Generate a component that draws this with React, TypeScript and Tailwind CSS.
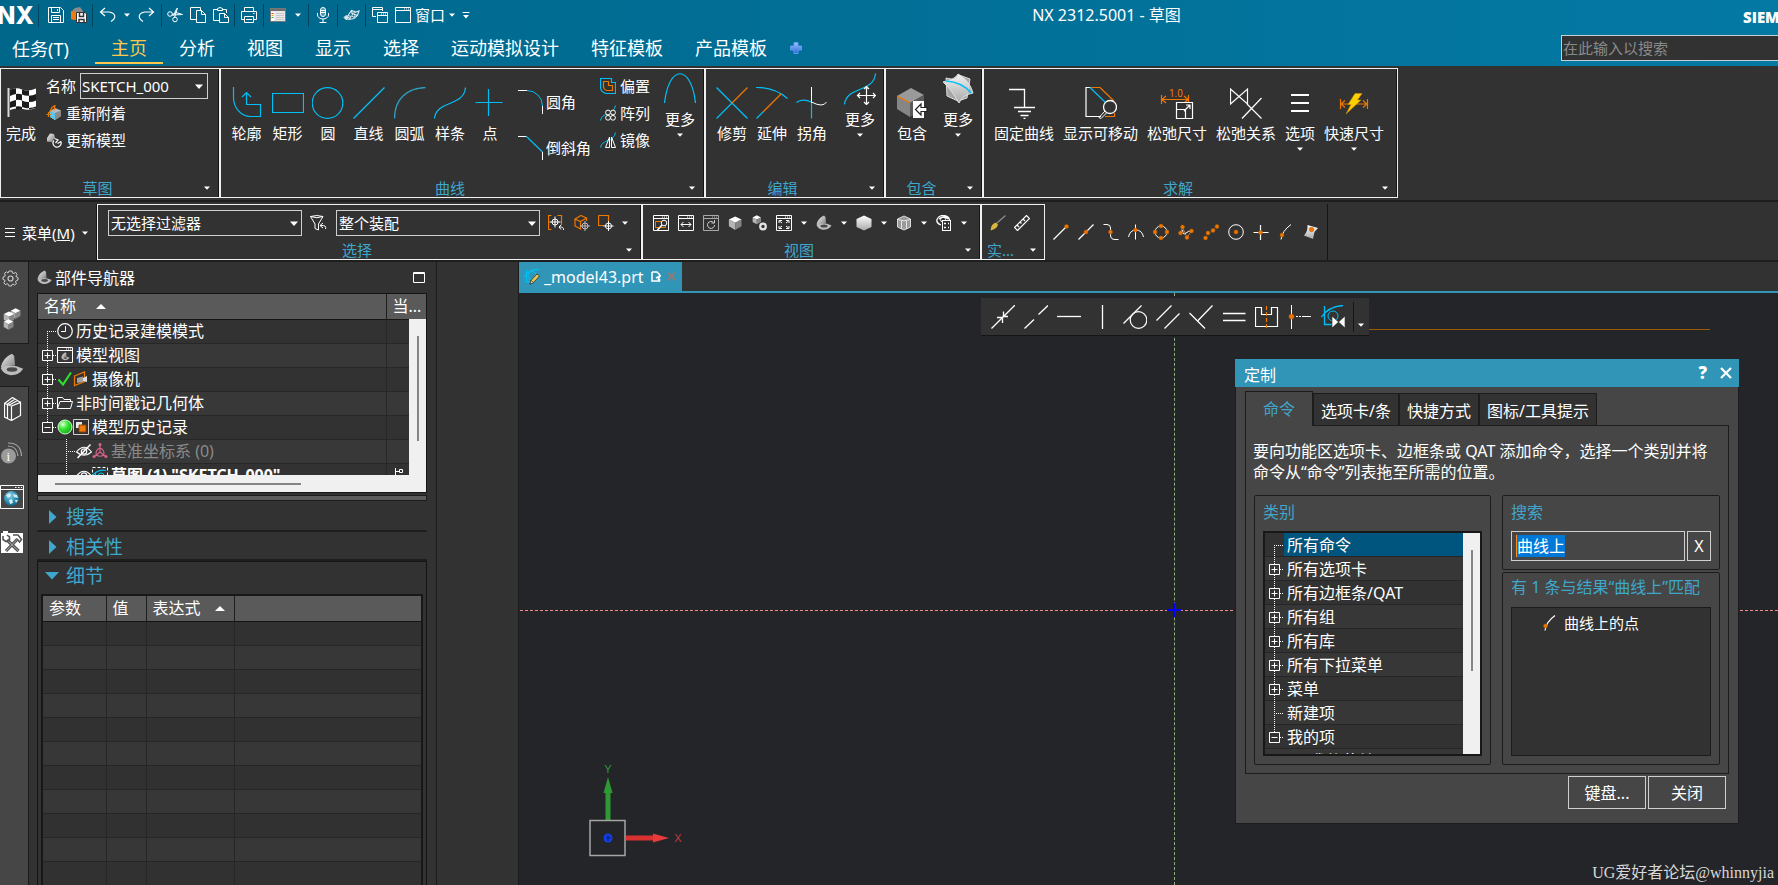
import React, { ReactNode } from "react";

const C = "#00bff5";
const O = "#ee7700";
const W = "#ffffff";

type IconProps = { s?: number; w?: number; h?: number; vb?: string; children: ReactNode };

function Svg({ s = 16, w, h, vb, children }: IconProps) {
  const width = w ?? s;
  const height = h ?? s;
  return (
    <svg
      width={width}
      height={height}
      viewBox={vb ?? `0 0 ${width} ${height}`}
      fill="none"
      stroke={W}
      strokeWidth={1}
      className="block shrink-0"
      aria-hidden="true"
    >
      {children}
    </svg>
  );
}

function Caret() {
  return (
    <Svg w={6} h={4}>
      <path d="M0 0.5H6L3 3.8Z" fill={W} stroke="none" />
    </Svg>
  );
}

function Shades() {
  return (
    <svg width="0" height="0" className="absolute" aria-hidden="true">
      <defs>
        <linearGradient id="metal" x1="0" y1="0" x2="1" y2="1">
          <stop offset="0" stopColor="#f2f2f2" />
          <stop offset="1" stopColor="#7d7d7d" />
        </linearGradient>
        <linearGradient id="flat" x1="0" y1="0" x2="0" y2="1">
          <stop offset="0" stopColor="#ffffff" />
          <stop offset="1" stopColor="#a9a9a9" />
        </linearGradient>
        <radialGradient id="ball" cx="0.35" cy="0.3" r="0.8">
          <stop offset="0" stopColor="#e8ffe0" />
          <stop offset="0.4" stopColor="#3fe83a" />
          <stop offset="1" stopColor="#0aa010" />
        </radialGradient>
        <radialGradient id="globe" cx="0.4" cy="0.3" r="0.8">
          <stop offset="0" stopColor="#7fd3ea" />
          <stop offset="0.6" stopColor="#2a88ab" />
          <stop offset="1" stopColor="#0c5270" />
        </radialGradient>
        <linearGradient id="plus" x1="0" y1="0" x2="0" y2="1">
          <stop offset="0" stopColor="#9cc6ff" />
          <stop offset="1" stopColor="#2a62d8" />
        </linearGradient>
      </defs>
    </svg>
  );
}

function Dot({ x, y, r = 2 }: { x: number; y: number; r?: number }) {
  return <circle cx={x} cy={y} r={r} fill={O} stroke="#b85c00" strokeWidth={0.5} />;
}

/* ---------- title bar icons ---------- */

const SaveIcon = () => (
  <Svg>
    <path d="M0.5 0.5H12.5L15.5 3.5V15.5H0.5ZM3.5 0.5V5.5H11.5V0.5M9.5 2V4M3.5 15.5V8.5H12.5V15.5M5 10.5H11M5 12.5H11" />
  </Svg>
);
const SaveAllIcon = () => (
  <Svg>
    <path d="M4 1L9 0L12 4V8L4 13L0 12V5Z" fill="#8b8b8b" stroke="none" />
    <path d="M0 4L5 5V13L0 12Z" fill="#f07a10" stroke="none" />
    <path d="M5.500 5.500H14L15.500 7V15.500H5.500Z" fill="#fff" stroke="#333" />
    <path d="M8.500 6V9.500H12.500V6M8 15V12.500H13V15" stroke="#333" strokeWidth={1.500} />
  </Svg>
);
const UndoIcon = () => (
  <Svg w={17}>
    <path d="M6 1L1.500 5L6 9M1.500 5H10C17 6 17.500 11 12 14.500" strokeWidth={1.200} />
  </Svg>
);
const RedoIcon = () => (
  <Svg w={17}>
    <path d="M11 1L15.500 5L11 9M15.500 5H7C0 6 -0.500 11 5 14.500" strokeWidth={1.200} />
  </Svg>
);
const CutIcon = () => (
  <Svg>
    <circle cx="3" cy="7" r="2.300" />
    <circle cx="8" cy="12.500" r="2.300" />
    <path d="M5 8L15.500 7.500L9 5.500L5 8M7.500 10.500L10.500 1L9.500 2L6.500 8.500" />
  </Svg>
);
const CopyIcon = () => (
  <Svg>
    <path d="M6.500 3.500H11.500L15.500 7.500V15.500H6.500ZM11.500 3.500V7.500H15.500M6 12.500H0.500V0.500H10.500V3" />
  </Svg>
);
const PasteIcon = () => (
  <Svg>
    <path d="M6.500 6.500H11.500L15.500 10.500V15.500H6.500ZM11.500 6.500V10.500H15.500M6 13.500H0.500V2.500H4M10 2.500H13.500V6M4.500 3.500V1.500L7 0.500L9.500 1.500V3.500Z" />
  </Svg>
);
const PrintIcon = () => (
  <Svg>
    <path d="M3.500 4.500V0.500H12.500V4.500M3.500 12.500H0.500V4.500H15.500V12.500H12.500M3.500 9.500H12.500V15.500H3.500ZM5 12.500H11M12 6.500H13.500" />
  </Svg>
);
const PaneIcon = () => (
  <Svg>
    <rect x="0.500" y="1.500" width="15" height="13" fill="#e9e9e9" stroke="#777" />
    <path d="M1 3H15" stroke="#6e6e6e" strokeWidth={2} />
    <path d="M1 5H4V14H1Z" fill="#fff" stroke="none" />
    <path d="M1.500 6.500H3.500" stroke="#d33" />
    <path d="M1.500 8.500H3.500" stroke="#e8a000" />
    <path d="M1.500 10.500H3.500" stroke="#3a3" />
    <path d="M6 6.500H14M6 8.500H14M6 10.500H14M6 12.500H14" stroke="#c9c9c9" />
  </Svg>
);
const MicIcon = () => (
  <Svg w={12}>
    <rect x="3.500" y="0.500" width="5" height="9" rx="2.500" fill="#4d97b1" />
    <path d="M0.500 6V8A5.500 4 0 0 0 11.500 8V6M6 12V15M2.500 15.500H9.500M4 3.500H8M4 5.500H8" />
  </Svg>
);
const HandIcon = () => (
  <Svg w={17}>
    <path d="M1 10.500L3.500 13L6 10.500L3 8.500Z" fill="#d9e6ec" stroke="#d9e6ec" />
    <path d="M5 8.500L8.500 3.500L13 5L16 4L14.500 8.500L11 11.500L6 12.500L8 9.500ZM8.500 3.500L9 6.500L13 5M11 7L14.500 8.500" stroke="#d9e6ec" strokeWidth={1.200} />
    <circle cx="10.500" cy="8.500" r="1.500" />
  </Svg>
);
const WindowsIcon = () => (
  <Svg>
    <path d="M0.500 0.500H10.500V4M4 9.500H0.500V0.500M0.500 2.500H10.500M5.500 5.500H15.500V15.500H5.500ZM5.500 8.500H15.500M9 7H10M11 7H12M13 7H14" />
  </Svg>
);
const WindowIcon = () => (
  <Svg>
    <path d="M0.500 0.500H15.500V15.500H0.500ZM0.500 3.500H15.500M9 2H10M11 2H12M13 2H14" />
  </Svg>
);

function QatSep() {
  return <span className="h-[23px] w-px bg-[#00455e]" />;
}

function QatButton({ label, children }: { label: string; children: ReactNode }) {
  return (
    <button type="button" aria-label={label} className="flex items-center">
      {children}
    </button>
  );
}

function TitleBar() {
  return (
    <header className="bg-gradient-to-r from-[#00668a] to-[#0479a4] text-white">
      <div className="flex h-[30px] items-center overflow-hidden">
        <div className="w-[38px] shrink-0 overflow-hidden pt-[2px]">
          <span className="-ml-[3px] block font-[Inter,sans-serif] text-[24px] leading-[28px] font-extrabold">NX</span>
        </div>
        <QatSep />
        <div className="flex items-center gap-[7px] pr-[5px] pl-[9px]">
          <QatButton label="保存"><SaveIcon /></QatButton>
          <QatButton label="全部保存"><SaveAllIcon /></QatButton>
        </div>
        <QatSep />
        <div className="flex items-center gap-[8px] pr-[6px] pl-[6px]">
          <QatButton label="撤销"><UndoIcon /></QatButton>
          <QatButton label="撤销列表"><Caret /></QatButton>
          <QatButton label="重做"><RedoIcon /></QatButton>
        </div>
        <QatSep />
        <div className="flex items-center gap-[7px] pr-[5px] pl-[5px]">
          <QatButton label="剪切"><CutIcon /></QatButton>
          <QatButton label="复制"><CopyIcon /></QatButton>
          <QatButton label="粘贴"><PasteIcon /></QatButton>
        </div>
        <QatSep />
        <div className="px-[6px]">
          <QatButton label="打印"><PrintIcon /></QatButton>
        </div>
        <QatSep />
        <div className="flex items-center gap-[9px] pr-[7px] pl-[6px]">
          <QatButton label="窗格"><PaneIcon /></QatButton>
          <QatButton label="窗格列表"><Caret /></QatButton>
        </div>
        <QatSep />
        <div className="px-[8px]">
          <QatButton label="语音"><MicIcon /></QatButton>
        </div>
        <QatSep />
        <div className="px-[5px]">
          <QatButton label="触控"><HandIcon /></QatButton>
        </div>
        <QatSep />
        <div className="flex items-center gap-[7px] pl-[6px]">
          <QatButton label="层叠"><WindowsIcon /></QatButton>
          <button type="button" className="flex items-center gap-1 text-[15px] leading-5">
            <WindowIcon />
            窗口
            <Caret />
          </button>
          <QatButton label="更多命令">
            <Svg w={8} h={7}>
              <path d="M0.500 0.500H7.500" />
              <path d="M1 3H7L4 6.500Z" fill={W} stroke="none" />
            </Svg>
          </QatButton>
        </div>
        <h1 className="flex-1 text-center text-[16px] leading-5 whitespace-nowrap">NX 2312.5001 - 草图</h1>
        <div className="mt-1 w-[35px] shrink-0 overflow-hidden">
          <span className="font-['Open_Sans',sans-serif] text-[15px] leading-5 font-extrabold">SIEMENS</span>
        </div>
      </div>
      <div className="flex h-9 items-stretch text-[18px] leading-6">
        <button type="button" className="w-[95px] pt-[2px] pl-3 text-left">任务(T)</button>
        {["主页", "分析", "视图", "显示", "选择", "运动模拟设计", "特征模板", "产品模板"].map((t, i) => (
          <button
            key={t}
            type="button"
            className={
              i === 0
                ? "mb-[2px] border-b-2 border-[#ffc84a] px-4 pt-1 text-[#ffc84a]"
                : "mb-[2px] border-b-2 border-transparent px-4 pt-1"
            }
          >
            {t}
          </button>
        ))}
        <button type="button" aria-label="添加选项卡" className="ml-[7px]">
          <Svg s={12}>
            <path d="M4 0.500H8V4H11.500V8H8V11.500H4V8H0.500V4H4Z" fill="url(#plus)" stroke="#5f9df0" />
          </Svg>
        </button>
        <div className="flex-1" />
        <input
          type="search"
          aria-label="在此输入以搜索"
          placeholder="在此输入以搜索"
          className="mt-[5px] h-[26px] w-[217px] border border-r-0 border-[#c4cfd4] bg-[#323232] pl-px text-[15px] text-white outline-none placeholder:text-[#8a8a8a]"
        />
      </div>
    </header>
  );
}

/* ---------- ribbon icons ---------- */

const FlagIcon = () => (
  <Svg s={32}>
    <path d="M3.500 1V30" stroke="#d8d8d8" strokeWidth={2} />
    <path d="M5 3Q11 0 17 2.500T31 1.500V21Q24 24 18 22T5 23Z" fill="#fff" stroke="none" />
    <path
      d="M5 3Q8 1.500 11 1.300V7Q8 7.500 5 9ZM17 2.500Q20 3.800 24 3.300V8.800Q20 9 17 7.500ZM11 7Q14 6.500 17 7.500V13.500Q14 12.500 11 13ZM24 8.800Q28 8.500 31 7V13.500Q28 15 24 15ZM5 15Q8 13.500 11 13V19.500Q8 19.800 5 21ZM17 13.500Q20 15 24 15V21Q20 21.500 17 20ZM11 19.500Q14 19 17 20V22L11 22.500ZM24 21Q28 20.500 31 19.500V21L24 22.500Z"
      fill="#1c1c1c"
      stroke="none"
    />
  </Svg>
);
const ProfileIcon = () => (
  <Svg s={32}>
    <path d="M2.500 0V10A17 19 0 0 0 20 29.500H29.500V17.500H15.500V6M11 10L15.500 5.500L20 10" stroke={C} strokeWidth={1.200} />
  </Svg>
);
const RectIcon = () => (
  <Svg s={32}>
    <path d="M0.500 6.500H31.500V25.500H0.500Z" stroke={C} strokeWidth={1.200} />
  </Svg>
);
const CircleIcon = () => (
  <Svg s={32}>
    <circle cx="15.500" cy="16" r="15.300" stroke={C} strokeWidth={1.200} />
  </Svg>
);
const LineIcon = () => (
  <Svg s={32}>
    <path d="M0.500 31.500L31.500 0.500" stroke={C} strokeWidth={1.300} />
  </Svg>
);
const ArcIcon = () => (
  <Svg s={32}>
    <path d="M0.500 31.500C0.500 13 12 1 31.500 0.500" stroke="#2f9fc0" strokeWidth={1.300} />
  </Svg>
);
const SplineIcon = () => (
  <Svg s={32}>
    <path d="M0.500 31.500C2 13 30 20 31.500 0.500" stroke={C} strokeWidth={1.200} />
  </Svg>
);
const PointIcon = () => (
  <Svg s={32}>
    <path d="M1.500 15.500H28.500M14.500 2V29" stroke={C} strokeWidth={1.200} />
  </Svg>
);
const FilletIcon = () => (
  <Svg w={26} h={26}>
    <path d="M0 1.500H9M24.500 17V25" />
    <path d="M9 1.500A15.500 15.500 0 0 1 24.500 17" stroke={C} />
  </Svg>
);
const ChamferIcon = () => (
  <Svg w={26} h={26}>
    <path d="M0 1.500H8.500M24.500 17V25" />
    <path d="M8.500 1.500L24.500 17" stroke={C} strokeWidth={1.200} />
  </Svg>
);
const OffsetIcon = () => (
  <Svg>
    <path d="M0.500 0.500H11.500V4.500H15.500V15.500H6Q0.500 14 0.500 9Z" stroke={C} strokeWidth={1.200} />
    <path d="M3.500 3.500H8.500V7.500H12.500V12.500H7Q3.500 11.500 3.500 8.500Z" stroke={O} strokeWidth={1.200} />
  </Svg>
);
const PatternIcon = () => (
  <Svg>
    <path d="M0.500 15.500C2 7 14 10 15.500 0.500" stroke={C} />
    {[8, 13].map((x) =>
      [7.5, 12.8].map((y) => <circle key={`${x}-${y}`} cx={x} cy={y} r={2.4} fill="#323232" />),
    )}
  </Svg>
);
const MirrorIcon = () => (
  <Svg>
    <path d="M0.500 15.500C2 7 14 10 15.500 0.500" stroke={C} />
    <path d="M9.500 5V15.500H5.500Z M11.500 5V15.500H15.500Z" fill="#323232" />
  </Svg>
);
const ConicIcon = () => (
  <Svg s={32}>
    <path d="M0.500 30C5 -9 27 -9 31.500 30" stroke={C} strokeWidth={1.200} />
  </Svg>
);
const TrimIcon = () => (
  <Svg s={32}>
    <path d="M0.500 31.500L16 16M0.500 0.500L31.500 31.500" stroke={C} strokeWidth={1.300} />
    <path d="M16 16L31.500 0.500" stroke={O} strokeWidth={1.300} />
  </Svg>
);
const ExtendIcon = () => (
  <Svg s={32}>
    <path d="M0 0.500Q18 0 31.500 11.500M0.500 31.500L7 25" stroke={C} strokeWidth={1.200} />
    <path d="M7 25L25 7" stroke={O} strokeWidth={1.300} />
  </Svg>
);
const CornerIcon = () => (
  <Svg s={32}>
    <path d="M15.500 0V16" />
    <path d="M15.500 16V31.500M0.500 15.500Q6 11 15.500 15" stroke={C} strokeWidth={1.200} />
    <path d="M15.500 15Q27 21 30.500 15" />
  </Svg>
);
const MoveCurveIcon = () => (
  <Svg s={32}>
    <path d="M0.500 31.500C2 13 30 20 31.500 0.500" stroke={C} strokeWidth={1.200} />
    <path
      d="M13.500 22.500H31.500M22.500 13.500V31.500M16 20L13.500 22.500L16 25M29 20L31.500 22.500L29 25M20 16L22.500 13.500L25 16M20 29L22.500 31.500L25 29"
      strokeWidth={1.200}
    />
  </Svg>
);
const IncludeIcon = () => (
  <Svg s={32}>
    <path d="M1 9L15 1L28 8L14 16Z" fill="#9a9a9a" stroke="none" />
    <path d="M1 9L14 16V30L1 22Z" fill="#868686" stroke="none" />
    <path d="M28 8L14 16V30L28 22Z" fill="#5a5a5a" stroke="none" />
    <path d="M1 9L14 16" stroke={O} strokeWidth={1.300} />
    <path d="M17 14H28V31H17Z" fill="#fff" stroke="none" />
    <path d="M25 17L19.500 22.500L25 28V24.500H31V20.500H25Z" fill="#fff" stroke="#222" strokeWidth={1.200} />
  </Svg>
);
const SurfaceIcon = () => (
  <Svg s={32}>
    <path d="M4 5L14 7L17 2L28 6L25 25L16 28L5 23Z" fill="#a5a5a5" stroke="#ddd" />
    <path d="M1 9Q14 6 16 1Q28 8 31 20Q20 22 17 30Q9 16 1 9Z" fill="url(#flat)" stroke="#e0e0e0" fillOpacity={0.85} />
    <path d="M4 8Q20 9 29 20" stroke={C} strokeWidth={1.600} />
  </Svg>
);
const FixIcon = () => (
  <Svg s={32}>
    <path d="M1 2.500H16.500V20.500M6 20.500H27M10 24.500H23M12.500 28.500H20.500M15.500 31.500H17.500" strokeWidth={1.300} />
  </Svg>
);
const ShowMovableIcon = () => (
  <Svg s={32}>
    <path d="M5 0.500H1V29.500H16" strokeWidth={1.200} />
    <path d="M5 0.500H15L29 14M29.500 26V29.500H20" stroke={O} strokeWidth={1.200} />
    <path d="M5 0.500L20 15" stroke={C} strokeWidth={1.200} />
    <circle cx="25" cy="20" r="6.500" fill="#323232" strokeWidth={1.300} />
    <path d="M20 24L14 30.500L16 31.500L21.500 26" />
  </Svg>
);
const RelaxDimIcon = () => (
  <Svg w={34} h={32}>
    <path d="M1.500 8V17M28.500 8V17M2 12.500H28M6 9L2 12.500L6 16M24 9L28 12.500L24 16" stroke={O} strokeWidth={1.200} />
    <text x="9" y="10" fill={O} stroke="none" fontSize="10" fontFamily="Roboto, Noto Sans, sans-serif">1.0</text>
    <path d="M16.500 15.500H32.500V31.500H16.500ZM16.500 22.500H25.500V31.500M24 24L30 18M26 18H30V22" fill="#323232" strokeWidth={1.200} />
  </Svg>
);
const RelaxRelIcon = () => (
  <Svg s={32}>
    <path d="M0.500 2V17L17.500 2V17ZM17 17L31.500 31.500M31.500 11L12 31.500" strokeWidth={1.200} />
  </Svg>
);
const OptionsIcon = () => (
  <Svg w={20} h={32}>
    <path d="M1 8H19M1 16H19M1 24H19" strokeWidth={2} />
  </Svg>
);
const RapidDimIcon = () => (
  <Svg s={32}>
    <path d="M2.500 12V22M29.500 12V22M3 17H29M7 13.500L3 17L7 20.500M25 13.500L29 17L25 20.500" stroke={O} strokeWidth={1.200} />
    <path d="M17 6.500H24L19.500 13H23L8 27L13 17.500H10Z" fill="#ffd000" stroke="#c98c00" strokeWidth={0.600} />
  </Svg>
);
const ReattachIcon = () => (
  <Svg>
    <path d="M4 6L9 3L15 5.500V11L9 15L4 12Z" fill="#b9b9b9" stroke="none" />
    <path d="M4 6L9 8V15L4 12Z" fill="#5dc6e8" stroke="none" />
    <path d="M9 8L15 5.500V11L9 15Z" fill="#8a8a8a" stroke="none" />
    <path d="M0.500 9.500H5M2.500 7V12M2.500 9L6 2.500L9 0.500L8 5" stroke={O} strokeWidth={1.200} />
  </Svg>
);
const UpdateIcon = () => (
  <Svg>
    <path d="M1 6L4 1.500L8 2L9 6L6 10L1 9.500Z" fill="url(#metal)" stroke="none" />
    <circle cx="11" cy="11" r="5" fill="#323232" stroke="none" />
    <path d="M8 8.500A4 4 0 1 0 14.500 9M8.500 6.500L12 8L9.500 11M11.500 11.500L15 9.500" strokeWidth={1.200} />
  </Svg>
);

function Big({ icon, label, more, high, cls }: { icon: ReactNode; label: string; more?: boolean; high?: boolean; cls: string }) {
  return (
    <div className={high ? "pt-1" : "pt-[18px]"}>
      <button type="button" className={`${cls} flex flex-col items-center gap-1 text-[15px] leading-5 whitespace-nowrap`}>
        {icon}
        {label}
        {more && <Caret />}
      </button>
    </div>
  );
}

function Small({ icon, label }: { icon: ReactNode; label: string }) {
  return (
    <button type="button" className="flex h-[27px] items-center gap-1 text-[15px] leading-5 whitespace-nowrap">
      {icon}
      {label}
    </button>
  );
}

function Panel({ title, cls, children }: { title: string; cls: string; children: ReactNode }) {
  return (
    <section className={`${cls} flex shrink-0 flex-col border border-[#f0f0f0]`}>
      <div className="flex flex-1 flex-col border-r border-[#151515]">
        <div className="flex flex-1 items-start">{children}</div>
        <div className="flex h-[18px] items-center text-[15px] leading-4 text-[#3fa7cb]">
          <h2 className="flex-1 text-center">{title}</h2>
          <button type="button" aria-label={`${title}选项`} className="w-6 pl-[10px]">
            <Caret />
          </button>
        </div>
      </div>
    </section>
  );
}

function Ribbon() {
  return (
    <div className="flex h-[136px] items-stretch border-b-2 border-[#1e1e1e] pt-[2px] pb-[2px] text-white">
      <Panel title="草图" cls="w-[220px]">
        <Big icon={<FlagIcon />} label="完成" cls="w-[40px]" />
        <div className="flex flex-col pt-[3px] pl-[5px]">
          <div className="flex h-[27px] items-center gap-1 text-[15px] leading-5">
            <label htmlFor="sketch-name">名称</label>
            <span className="relative">
              <select
                id="sketch-name"
                className="block h-[26px] w-[128px] appearance-none border border-[#cfcfcf] bg-[#323232] pl-px text-[15px] leading-5 outline-none"
              >
                <option>SKETCH_000</option>
              </select>
              <span className="pointer-events-none absolute top-[11px] right-[5px]">
                <Svg w={8} h={5}><path d="M0 0.500H8L4 5Z" fill={W} stroke="none" /></Svg>
              </span>
            </span>
          </div>
          <Small icon={<ReattachIcon />} label="重新附着" />
          <Small icon={<UpdateIcon />} label="更新模型" />
        </div>
      </Panel>
      <Panel title="曲线" cls="w-[485px]">
        <div className="flex pl-[5px]">
          <Big icon={<ProfileIcon />} label="轮廓" cls="w-[41px]" />
          <Big icon={<RectIcon />} label="矩形" cls="w-[41px]" />
          <Big icon={<CircleIcon />} label="圆" cls="w-[40px]" />
          <Big icon={<LineIcon />} label="直线" cls="w-[41px]" />
          <Big icon={<ArcIcon />} label="圆弧" cls="w-[41px]" />
          <Big icon={<SplineIcon />} label="样条" cls="w-[40px]" />
          <Big icon={<PointIcon />} label="点" cls="w-[40px]" />
        </div>
        <div className="flex flex-col gap-5 pt-5 pl-2 text-[15px] leading-5">
          <button type="button" className="flex items-center gap-[2px]"><FilletIcon />圆角</button>
          <button type="button" className="flex items-center gap-[2px]"><ChamferIcon />倒斜角</button>
        </div>
        <div className="flex flex-col pt-[3px] pl-[9px]">
          <Small icon={<OffsetIcon />} label="偏置" />
          <Small icon={<PatternIcon />} label="阵列" />
          <Small icon={<MirrorIcon />} label="镜像" />
        </div>
        <div className="pl-[13px]">
          <Big icon={<ConicIcon />} label="更多" high more cls="w-[34px]" />
        </div>
      </Panel>
      <Panel title="编辑" cls="w-[180px]">
        <div className="flex pl-[6px]">
          <Big icon={<TrimIcon />} label="修剪" cls="w-[40px]" />
          <Big icon={<ExtendIcon />} label="延伸" cls="w-[40px]" />
          <Big icon={<CornerIcon />} label="拐角" cls="w-[40px]" />
          <div className="pl-2">
            <Big icon={<MoveCurveIcon />} label="更多" high more cls="w-[40px]" />
          </div>
        </div>
      </Panel>
      <Panel title="包含" cls="w-[98px]">
        <div className="flex gap-[6px] pl-[6px]">
          <Big icon={<IncludeIcon />} label="包含" cls="w-[40px]" />
          <Big icon={<SurfaceIcon />} label="更多" high more cls="w-[40px]" />
        </div>
      </Panel>
      <Panel title="求解" cls="w-[415px]">
        <div className="flex gap-[9px] pl-[10px]">
          <Big icon={<FixIcon />} label="固定曲线" cls="w-[60px]" />
          <Big icon={<ShowMovableIcon />} label="显示可移动" cls="w-[75px]" />
          <Big icon={<RelaxDimIcon />} label="松弛尺寸" cls="w-[60px]" />
          <Big icon={<RelaxRelIcon />} label="松弛关系" cls="w-[60px]" />
          <Big icon={<OptionsIcon />} label="选项" more cls="w-[30px]" />
          <Big icon={<RapidDimIcon />} label="快速尺寸" more cls="w-[60px]" />
        </div>
      </Panel>
    </div>
  );
}

/* ---------- selection bar ---------- */

const WinFrame = ({ color = W }: { color?: string }) => (
  <path d="M0.500 0.500H15.500V15.500H0.500ZM0.500 3.500H15.500M9 2H10M11 2H12M13 2H14" stroke={color} />
);

const Cube = ({ x = 0, y = 0, k = 1 }: { x?: number; y?: number; k?: number }) => (
  <g transform={`translate(${x} ${y}) scale(${k})`} stroke="none">
    <path d="M1 4L8 0.500L15 4L8 7.500Z" fill="#ffffff" />
    <path d="M1 4L8 7.500V15.500L1 11.500Z" fill="#b5b5b5" />
    <path d="M15 4L8 7.500V15.500L15 11.500Z" fill="#858585" />
  </g>
);

function Icon({ label, children }: { label: string; children: ReactNode }) {
  return (
    <button type="button" aria-label={label} className="flex h-[26px] shrink-0 items-center justify-center">
      {children}
    </button>
  );
}

const NavShape = ({ k = 1 }: { k?: number }) => (
  <g transform={`scale(${k})`} stroke="none">
    <path d="M0.500 9.500Q2 3 8 0.500L9.500 2L10 8.500Q6 7.500 3 10.500Z" fill="url(#metal)" />
    <path d="M0.500 10Q7 6.500 15.500 10.500Q12.500 15 7 14.800Q2 14 0.500 10Z" fill="#bdbdbd" />
    <ellipse cx="8" cy="11" rx="3.500" ry="1.500" fill="#4a4a4a" />
  </g>
);

const BrushCurve = () => (
  <Svg>
    <path d="M3 15.500Q4 7 13 0.500" strokeWidth={1.200} />
    <Dot x={3.500} y={11} />
  </Svg>
);

function SnapIcons() {
  const list: [string, ReactNode][] = [
    ["端点", <><path d="M0.500 15.500L14 2" strokeWidth={1.200} /><Dot x={13.500} y={2.500} /></>],
    ["中点", <><path d="M0.500 15.500L15.500 0.500" strokeWidth={1.200} /><Dot x={8} y={8} /></>],
    ["控制点", <><path d="M0.500 0.500H4Q7.500 0.500 7.500 4V11Q7.500 15.500 12 15.500H15.500" /><Dot x={7.500} y={8} /></>],
    ["交点", <><path d="M0.500 13Q2 6 8 6T15.500 13M7.500 0.500V15.500" /><Dot x={7.500} y={6} /></>],
    ["象限点", <><circle cx="8" cy="8" r="6" /><Dot x={8} y={2} /><Dot x={8} y={14} /><Dot x={2} y={8} /><Dot x={14} y={8} /></>],
    ["极点", <><path d="M2.500 9L4.500 3M4.500 3L9 13.500L13.500 7" stroke="#b07a48" /><path d="M4.500 6Q5 12 8 9T13 8" /><Dot x={2.500} y={9} /><Dot x={4.500} y={3} /><Dot x={9} y={13.500} /><Dot x={13.500} y={7} /></>],
    ["定义点", <><path d="M2 14L14 2" strokeDasharray="2 2" stroke="#8a5a2a" /><Dot x={2.500} y={14} /><Dot x={5} y={9} /><Dot x={10} y={6.500} /><Dot x={14} y={2.500} /></>],
    ["圆心", <><circle cx="8" cy="8" r="7.300" /><Dot x={8} y={8} /></>],
    ["现有点", <><path d="M0.500 8.500H15.500M7.500 1V16" strokeWidth={1.200} /><Dot x={7.500} y={8.500} /></>],
    ["曲线上的点", <><path d="M3 15.500Q4 7 13 0.500" /><Dot x={4} y={11} /></>],
    ["面上的点", <><path d="M4.500 1L15 4L11.500 8L10 15L1 11.500Q5 7 4.500 1Z" fill="url(#flat)" stroke="none" /><Dot x={8.500} y={5.500} r={2.300} /></>],
  ];
  return (
    <div className="flex items-center gap-[9px] border-r border-[#151515] pr-[8px] pl-[8px]">
      {list.map(([l, g]) => (
        <Icon key={l} label={l}><Svg>{g}</Svg></Icon>
      ))}
    </div>
  );
}

function FilterSelect({ label, value, cls }: { label: string; value: string; cls: string }) {
  return (
    <span className="relative">
      <select
        aria-label={label}
        className={`${cls} block h-[26px] appearance-none border border-[#cfcfcf] bg-[#323232] pl-[2px] text-[15px] leading-5 outline-none`}
      >
        <option>{value}</option>
      </select>
      <span className="pointer-events-none absolute top-[11px] right-[4px]">
        <Svg w={8} h={5}><path d="M0 0.500H8L4 5Z" fill={W} stroke="none" /></Svg>
      </span>
    </span>
  );
}

function SelectionBar() {
  return (
    <div className="flex h-[60px] items-stretch border-b-2 border-[#1e1e1e] pt-[2px] text-white">
      <div className="flex w-[97px] shrink-0 items-center border-r border-[#151515] pt-[2px] pl-[5px]">
        <button type="button" className="flex items-center gap-[7px] text-[15px] leading-5">
          <Svg w={10} h={10}><path d="M0 0.500H10M0 4.500H10M0 8.500H10" /></Svg>
          <span>菜单(<u>M</u>)</span>
          <Caret />
        </button>
      </div>
      <Panel title="选择" cls="w-[545px]">
        <div className="flex items-center gap-2 pt-[5px] pl-[10px]">
          <FilterSelect label="选择过滤器" value="无选择过滤器" cls="w-[194px]" />
          <Icon label="重置过滤器">
            <Svg w={18}>
              <path d="M0.500 1.500Q7 -0.500 13 1.500Q7 4 0.500 1.500L5 9V13.500L8.500 15V9L13 1.500M15.500 14Q17 10 10.500 10.500M13 8L10 10.500L13 13" />
            </Svg>
          </Icon>
          <FilterSelect label="选择范围" value="整个装配" cls="w-[204px]" />
          <Icon label="重置">
            <Svg w={18}>
              <path d="M3.500 0.500H0.500V14.500H3.500M9.500 0.500H13.500V10" stroke={O} strokeWidth={1.200} />
              <circle cx="7" cy="7" r="3" />
              <path d="M7 1.500V12.500M1.500 7H12.500M15.500 15Q16 11.500 11 12M13 10L11 12L13 14.500" />
            </Svg>
          </Icon>
          <Icon label="选择意图">
            <Svg>
              <path d="M1 4L7 0.500L12.500 3L6.500 6.500ZM1 4V11L6.500 14V6.500M12.500 3V6" stroke={O} strokeWidth={1.200} />
              <circle cx="11" cy="11" r="3" stroke="#bbb" />
              <path d="M11 6V16M6 11H16" stroke="#bbb" />
            </Svg>
          </Icon>
          <Icon label="区域选择">
            <Svg>
              <path d="M0.500 0.500H10.500V6M6 10.500H0.500V0.500" stroke={O} strokeWidth={1.200} />
              <circle cx="10.500" cy="11" r="3" />
              <path d="M10.500 6V16M5.500 11H15.500" />
            </Svg>
          </Icon>
          <Icon label="选择列表"><Caret /></Icon>
        </div>
      </Panel>
      <Panel title="视图" cls="w-[339px]">
        <div className="flex items-center gap-[9px] pt-[5px] pl-[10px]">
          <Icon label="适合窗口">
            <Svg><WinFrame /><path d="M2.500 6.500H12.500V12.500H2.500Z" stroke={O} /><circle cx="11" cy="8" r="2.800" fill="#323232" /><path d="M9 10L4.500 15" strokeWidth={1.500} /></Svg>
          </Icon>
          <Icon label="缩放"><Svg><WinFrame /><path d="M3 9.500H13M5.500 7L3 9.500L5.500 12M10.500 7L13 9.500L10.500 12" /></Svg></Icon>
          <Icon label="旋转"><Svg><WinFrame color="#a8a8a8" /><path d="M10.500 7.500A3.500 3.500 0 1 0 11.500 10M11.500 5V8H8.500" stroke="#cfcfcf" /></Svg></Icon>
          <Icon label="定向视图"><Svg w={15}><Cube y={1} k={0.900} /></Svg></Icon>
          <Icon label="视图设置">
            <Svg w={15}><Cube k={0.600} /><circle cx="11" cy="11.500" r="2.800" stroke="#e5e5e5" strokeWidth={2.200} /></Svg>
          </Icon>
          <Icon label="全屏"><Svg><WinFrame /><path d="M3 8V5.500H6M10 5.500H13V8M3 11V13.500H6M10 13.500H13V11M3.500 6L6 8M12.500 6L10 8M3.500 13L6 11M12.500 13L10 11" /></Svg></Icon>
          <Icon label="全屏列表"><Caret /></Icon>
          <Icon label="剖切"><Svg><NavShape /></Svg></Icon>
          <Icon label="剖切列表"><Caret /></Icon>
          <Icon label="着色">
            <Svg><path d="M0.500 4L8 0.500L15.500 4V12L8 15.500L0.500 12Z" fill="url(#flat)" stroke="none" /></Svg>
          </Icon>
          <Icon label="着色列表"><Caret /></Icon>
          <Icon label="边线">
            <Svg><path d="M1.500 4L8 1L14.500 4V12L8 15L1.500 12Z" fill="#9a9a9a" stroke="#ddd" /><path d="M1.500 4.500Q8 7 14.500 4.500M5.500 6V14M10.500 6V14" stroke="#e5e5e5" /></Svg>
          </Icon>
          <Icon label="边线列表"><Caret /></Icon>
          <Icon label="显示选项">
            <Svg><path d="M5 10Q0 8 1 4.500Q3 0 8 0.500Q13 1 13.500 5M3 4Q8 0 12 4" strokeWidth={1.300} /><circle cx="7" cy="4.500" r="2.500" /><rect x="6.500" y="5.500" width="8" height="10" fill="#323232" /><path d="M8 8.500H10M12 8.500H13M8 12.500H10M12 12.500H13" strokeWidth={1.500} /></Svg>
          </Icon>
          <Icon label="显示选项列表"><Caret /></Icon>
        </div>
      </Panel>
      <section className="flex w-[64px] shrink-0 flex-col border border-[#f0f0f0] pr-[2px]">
        <div className="flex flex-1 items-start gap-2 pt-[5px] pl-2">
          <Icon label="编辑显示">
            <Svg><path d="M7 8L15.500 0.500" stroke="#8d8d8d" strokeWidth={1.200} /><path d="M0.500 15.500Q1 8.500 6 7.500L8 9.500Q7 14 0.500 15.500Z" fill="#d9b441" stroke="none" /></Svg>
          </Icon>
          <Icon label="测量">
            <Svg><path d="M0.500 12.500L12.500 0.500L15.500 3.500L3.500 15.500ZM3 10L5 12M6 7L7.500 8.500M9 4L11 6" strokeWidth={1.200} /></Svg>
          </Icon>
        </div>
        <div className="flex h-[18px] items-center justify-between pr-[6px] pl-[5px] text-[15px] leading-4 text-[#3fa7cb]">
          <h2>实...</h2>
          <button type="button" aria-label="实用工具选项"><Caret /></button>
        </div>
      </section>
      <SnapIcons />
    </div>
  );
}

/* ---------- left resource bar ---------- */

function ResourceBar() {
  return (
    <nav aria-label="资源条" className="flex w-[29px] shrink-0 flex-col border-r border-[#1c1c1c] bg-[#464646]">
      <button type="button" aria-label="设置" className="flex h-8 items-center pl-[2px]">
        <Svg s={17}>
          <circle cx="8.500" cy="8.500" r="2.500" stroke="#cfcfcf" strokeWidth={1.200} />
          <path
            d="M7 1H10L10.500 3L12 3.500L13.700 2.300L15 4.500L14 6L14.300 7L16 7.500V10L14.300 10.500L13.500 12L14.500 13.500L12.500 15L11 14L10 14.500L9.500 16H7L6.500 14.500L5 13.700L3.500 14.700L1.800 12.700L3 11L2.700 10L1 9.500V7L2.700 6.500L3.300 5L2.300 3.500L4.300 1.800L6 3Z"
            stroke="#cfcfcf"
          />
        </Svg>
      </button>
      <button type="button" aria-label="装配导航器" className="flex h-[49px] items-center pl-[3px]">
        <Svg w={18} h={22}><Cube x={7} k={0.700} /><Cube x={0} y={3} k={0.750} /><Cube y={11} k={0.700} /></Svg>
      </button>
      <button type="button" aria-label="部件导航器" className="-mr-px flex h-[44px] items-center border-y border-[#1c1c1c] bg-[#323232]">
        <Svg s={24}><NavShape k={1.500} /></Svg>
      </button>
      <button type="button" aria-label="重用库" className="flex h-[44px] items-center pl-1">
        <Svg w={18} h={24}>
          <path d="M0.500 6.500L7.500 9V23.500L0.500 20ZM7.500 9L16.500 5.500V18.500L7.500 23.500M0.500 6.500L8.500 0.500L16.500 5.500M3 7.500L11 2M5 8.200L13.500 3.500M3.500 7.500V21.500" strokeWidth={1.200} />
        </Svg>
      </button>
      <button type="button" aria-label="信息" className="flex h-[43px] items-center">
        <Svg w={24} h={24}>
          <circle cx="8.500" cy="15" r="7.500" fill="#9b9b9b" stroke="none" />
          <text x="6.500" y="19.500" fill={W} stroke="none" fontSize="13" fontFamily="Liberation Serif, serif">i</text>
          <path d="M8 5Q17 5 18 15M8 2Q21 2 21.500 15" stroke="#a5a5a5" strokeWidth={1.200} />
        </Svg>
      </button>
      <button type="button" aria-label="网页浏览器" className="flex h-[46px] items-center">
        <Svg s={24}>
          <path d="M0.500 0.500H23.500V23.500H0.500ZM0.500 4.500H23.500M15 2.500H16.500M18 2.500H19.500M21 2.500H22" />
          <circle cx="11.500" cy="13.500" r="7.500" fill="url(#globe)" stroke="none" />
          <path d="M6 10L10 8L11 11L8 13ZM13 9L17 10L18 13L14 12ZM9 15L12 14L13 18L10 19ZM15 15L18 15L16 18Z" fill="#d6ecf3" stroke="none" />
        </Svg>
      </button>
      <button type="button" aria-label="角色" className="flex h-[44px] items-center">
        <Svg w={24} h={23}>
          <path d="M1 2H23V22H1ZM3 0H8V2H3Z" fill="#fff" stroke="none" />
          <path d="M7 9L18.500 20M17.500 8L6 20" stroke="#555" strokeWidth={3.200} />
          <path d="M7 9L18.500 20M17.500 8L6 20" stroke="#aaa" strokeWidth={1} />
          <path d="M13 4H18L21.500 8.500L19.500 11L17 8M3 5V8.500L6 10.500L9.500 9V6L7 4" stroke="#555" strokeWidth={1.600} />
        </Svg>
      </button>
    </nav>
  );
}

/* ---------- part navigator ---------- */

type Branch = "first" | "plus" | "minus" | "leaf";

function Gutter({ kind }: { kind: Branch }) {
  return (
    <Svg w={19} h={24}>
      <g strokeDasharray="1 1">
        {kind === "first" && <path d="M9.500 12V24M9 12.500H19" />}
        {kind === "plus" && <path d="M9.500 0V7M9.500 18V24M15 12.500H19" />}
        {kind === "minus" && <path d="M9.500 0V7M15 12.500H19" />}
        {kind === "leaf" && <path d="M9.500 0V24M9 12.500H19" />}
      </g>
      {(kind === "plus" || kind === "minus") && <path d="M4.500 7.500H14.500V17.500H4.500ZM6.500 12.500H12.500" />}
      {kind === "plus" && <path d="M9.500 9.500V15.500" />}
    </Svg>
  );
}

const ClockIcon = () => (
  <Svg><circle cx="8" cy="8" r="7.300" strokeWidth={1.200} /><path d="M8.500 3V8.500H4" /></Svg>
);
const ViewIcon = () => (
  <Svg><WinFrame /><g transform="translate(4 5) scale(0.55)"><NavShape /></g></Svg>
);
const CheckIcon = () => (
  <Svg><path d="M1.500 8.500L6 13.500L14 1.500" stroke="#2ee02a" strokeWidth={2.200} /></Svg>
);
const CameraIcon = () => (
  <Svg>
    <path d="M1.500 5L11.500 1V10.500L1.500 14.500Z" stroke={O} strokeWidth={1.300} />
    <path d="M4 7L10 5.500V11L4 12Z" fill="#a0a0a0" stroke="none" />
    <path d="M10 7L14 5V11L10 10Z" fill="#ddd" stroke="none" />
  </Svg>
);
const FolderIcon = () => (
  <Svg><path d="M0.500 13.500V2.500H5.500L7 4.500H13.500V6.500M0.500 13.500L3 6.500H15.500L13.500 13.500Z" /></Svg>
);
const BallIcon = () => (
  <Svg><circle cx="8" cy="8" r="7" fill="url(#ball)" stroke="#d6ffd2" /></Svg>
);
const HistoryIcon = () => (
  <Svg>
    <path d="M0.500 0.500H15.500V15.500H0.500Z" stroke="#cfcfcf" />
    <path d="M3 3H9V9H3Z" fill="#e9e9e9" stroke="none" />
    <path d="M6 6H13V13H6Z" fill="#f07a10" stroke="#8a4300" />
  </Svg>
);
const EyeIcon = ({ off }: { off?: boolean }) => (
  <Svg>
    <path d="M0.500 9Q8 -0.500 15.500 9Q8 15.500 0.500 9Z" strokeWidth={1.200} />
    <circle cx="8" cy="8.500" r="2.700" strokeWidth={1.200} />
    {off && <path d="M1.500 15L14.500 1.500" strokeWidth={1.500} />}
  </Svg>
);
const CsysIcon = () => (
  <Svg>
    <path d="M8 2V9L2.500 13.500M8 9L13.500 13.500M4 12Q3.500 6.500 8 5Q12.500 6.500 12 12Q8 14.500 4 12" stroke="#d4648a" strokeWidth={1.200} />
    <circle cx="8" cy="1.500" r="1.500" fill="#d4648a" stroke="none" />
    <circle cx="2" cy="13.500" r="1.500" fill="#d4648a" stroke="none" />
    <circle cx="14" cy="13.500" r="1.500" fill="#d4648a" stroke="none" />
  </Svg>
);
const SketchIcon = () => (
  <Svg>
    <path d="M0.500 0.500H15.500V15.500H0.500Z" strokeDasharray="3 2" />
    <path d="M3.500 13V5M1 8Q7 2 14 3.500" stroke={C} strokeWidth={1.200} />
    <circle cx="9" cy="9" r="3" stroke={C} />
  </Svg>
);

type NavRow = { kind: Branch; deep?: boolean; icons: ReactNode; text: string; cls?: string };

const navRows: NavRow[] = [
  { kind: "first", icons: <ClockIcon />, text: "历史记录建模模式" },
  { kind: "plus", icons: <ViewIcon />, text: "模型视图" },
  { kind: "plus", icons: <><CheckIcon /><CameraIcon /></>, text: "摄像机" },
  { kind: "plus", icons: <FolderIcon />, text: "非时间戳记几何体" },
  { kind: "minus", icons: <><BallIcon /><HistoryIcon /></>, text: "模型历史记录" },
  { kind: "leaf", deep: true, icons: <><EyeIcon off /><CsysIcon /></>, text: "基准坐标系 (0)", cls: "text-[#8a8a8a]" },
  { kind: "leaf", deep: true, icons: <><EyeIcon /><SketchIcon /></>, text: '草图 (1) "SKETCH_000"', cls: "font-bold" },
];

const SortUp = () => (
  <Svg w={10} h={5}><path d="M0 5L5 0L10 5Z" fill={W} stroke="none" /></Svg>
);

function PartTree() {
  return (
    <div className="border border-[#151515]">
      <div className="relative h-[181px] overflow-hidden">
        <table className="w-full table-fixed border-collapse text-[16px] leading-5">
          <colgroup>
            <col />
            <col className="w-[40px]" />
          </colgroup>
          <thead>
            <tr className="h-[25px] border-b border-[#151515] bg-[#5a5a5a] text-left">
              <th className="border-r border-[#1e1e1e] p-0 pl-[6px] font-normal">
                <span className="flex items-center gap-[20px]">名称 <SortUp /></span>
              </th>
              <th className="p-0 pl-[6px] font-normal whitespace-nowrap">当...</th>
            </tr>
          </thead>
          <tbody>
            {navRows.map((r, i) => (
              <tr key={r.text} className={i % 2 ? "h-6 bg-[#383838]" : "h-6 bg-[#323232]"}>
                <td className="border-r border-b border-[#272727] p-0">
                  <div className="flex h-[23px] items-center">
                    {r.deep && <span className="w-[19px]" />}
                    <Gutter kind={r.kind} />
                    {r.icons}
                    <span className={`${r.cls ?? ""} ml-[3px] whitespace-nowrap`}>{r.text}</span>
                  </div>
                </td>
                <td className="border-b border-[#272727] p-0 pl-2">
                  {i === 6 && (
                    <Svg w={9} h={16}>
                      <path d="M0.500 1V15M0.500 4.500H4M4.500 2.500H7.500V5.500H4.500Z" />
                      <path d="M4 8H8V12H4Z" fill="#f07a10" stroke="none" />
                    </Svg>
                  )}
                </td>
              </tr>
            ))}
          </tbody>
        </table>
        <div className="absolute top-[25px] right-0 bottom-0 w-[17px] bg-[#f0f0f0]">
          <div className="mt-[17px] ml-2 h-[105px] w-[2px] bg-[#858585]" />
        </div>
      </div>
      <div className="h-[17px] bg-[#f0f0f0] pt-2 pr-[125px] pl-[17px]">
        <div className="h-[2px] bg-[#858585]" />
      </div>
    </div>
  );
}

const TriRight = () => (
  <Svg w={8} h={14}><path d="M0 0L7.500 7L0 14Z" fill="#3fa7cb" stroke="none" /></Svg>
);

function PartNavigator() {
  return (
    <aside className="flex w-[408px] shrink-0 flex-col overflow-hidden border-r border-[#1c1c1c] pr-[9px] pl-2 text-white">
      <div className="flex h-[31px] shrink-0 items-center gap-[3px] pr-[2px]">
        <Svg s={15}><NavShape k={0.950} /></Svg>
        <h2 className="flex-1 text-[16px] leading-5">部件导航器</h2>
        <button type="button" aria-label="最大化">
          <Svg w={12} h={11}><path d="M0.500 0.500H11.500V10.500H0.500ZM0 1.500H12" /></Svg>
        </button>
      </div>
      <PartTree />
      <div className="mt-[2px] h-[6px] shrink-0 border border-[#1c1c1c] bg-[#5a5a5a]" />
      <button type="button" className="flex h-[31px] shrink-0 items-center gap-[9px] border-b-2 border-[#1e1e1e] pt-[3px] pl-3 text-[19px] leading-6 text-[#3fa7cb]">
        <TriRight />搜索
      </button>
      <button type="button" className="flex h-[29px] shrink-0 items-center gap-[9px] border-b-2 border-[#1e1e1e] pt-[2px] pl-3 text-[19px] leading-6 text-[#3fa7cb]">
        <TriRight />相关性
      </button>
      <section className="flex min-h-0 flex-1 flex-col border border-b-0 border-[#151515] px-[3px]">
        <button type="button" className="flex h-8 shrink-0 items-center gap-[7px] pb-1 pl-1 text-[19px] leading-6 text-[#3fa7cb]">
          <Svg w={14} h={8}><path d="M0 0H14L7 7.500Z" fill="#3fa7cb" stroke="none" /></Svg>
          细节
        </button>
        <div className="min-h-0 flex-1 overflow-hidden border-2 border-b-0 border-[#181818]">
          <table className="w-full table-fixed border-collapse text-[16px] leading-5">
            <colgroup>
              <col className="w-[63px]" />
              <col className="w-[40px]" />
              <col className="w-[88px]" />
              <col />
            </colgroup>
            <thead>
              <tr className="h-[25px] border-b border-[#151515] bg-[#5a5a5a] text-left">
                <th className="border-r border-[#1e1e1e] p-0 pl-[6px] font-normal">参数</th>
                <th className="border-r border-[#1e1e1e] p-0 pl-[6px] font-normal">值</th>
                <th className="border-r border-[#1e1e1e] p-0 pl-[6px] font-normal">
                  <span className="flex items-center gap-[14px]">表达式 <SortUp /></span>
                </th>
                <th className="p-0" />
              </tr>
            </thead>
            <tbody>
              {Array.from({ length: 12 }, (_, i) => (
                <tr key={i} className={i % 2 ? "h-6 bg-[#373737]" : "h-6 bg-[#313131]"}>
                  <td className="border-r border-b border-[#262626]" />
                  <td className="border-r border-b border-[#262626]" />
                  <td className="border-r border-b border-[#262626]" />
                  <td className="border-b border-[#262626]" />
                </tr>
              ))}
            </tbody>
          </table>
        </div>
      </section>
    </aside>
  );
}

/* ---------- graphics window ---------- */

function ConstraintBar() {
  const list: [string, ReactNode][] = [
    ["重合", <path d="M0.500 23.500L24 0M6 12.500H11.500V18M17 11.500H11.500M12.500 12V6.500" strokeWidth={1.300} />],
    ["共线", <path d="M0.500 23.500L10 14.500M14.500 9.500L24 0.500" strokeWidth={1.300} />],
    ["水平", <path d="M0 11.500H24" strokeWidth={1.300} />],
    ["竖直", <path d="M12.500 0V24" strokeWidth={1.300} />],
    ["相切", <><circle cx="15.500" cy="15" r="8.300" strokeWidth={1.200} /><path d="M0.500 18.500L18.500 0.500" strokeWidth={1.200} /></>],
    ["平行", <path d="M0.500 15.500L15.500 0.500M8.500 23.500L23.500 8.500" strokeWidth={1.300} />],
    ["垂直", <path d="M0.500 8L16 23.500M9 15.500L23.500 0.500" strokeWidth={1.300} />],
    ["相等", <path d="M1 8.500H23.500M1 15.500H23.500" strokeWidth={1.300} />],
    ["对称", <><path d="M0.500 2.500H6.500V9.500H16.500V2.500H22.500V21.500H0.500Z" strokeWidth={1.200} /><path d="M11.500 1V23" stroke={O} strokeDasharray="4 2" strokeWidth={1.200} /></>],
    ["中点", <><path d="M3.500 0V24" /><path d="M8 11.500H24" strokeDasharray="2 1 2 1 9" /><Dot x={3.500} y={11.500} r={2.500} /></>],
    ["松弛", <><path d="M3.500 1V19.500H12M0.500 12Q8 1 22 0.500" stroke={C} strokeWidth={1.300} /><circle cx="12" cy="11" r="5" stroke={C} /><path d="M11 11V23L17.500 17ZM24 11V23L17.500 17Z" fill={W} stroke="#222" strokeWidth={0.600} /></>],
  ];
  return (
    <div className="absolute top-[5px] left-[462px] flex h-[38px] items-center gap-[9px] border-b border-[#151515] bg-[#323232] pr-[5px] pl-[10px]">
      {list.map(([l, g]) => (
        <button key={l} type="button" aria-label={l}><Svg s={24}>{g}</Svg></button>
      ))}
      <span className="-ml-px h-[30px] w-px bg-[#151515]" />
      <button type="button" aria-label="更多关系" className="-ml-[5px] pt-4"><Caret /></button>
    </div>
  );
}

function Triad() {
  return (
    <svg width="110" height="100" viewBox="0 0 110 100" className="absolute top-[468px] left-[65px]" aria-label="坐标系">
      <text x="24" y="12" fill="#2f9a35" fontSize="11" fontFamily="Liberation Sans Narrow, Liberation Sans, sans-serif" textAnchor="middle">Y</text>
      <rect x="21.500" y="30" width="5" height="30" fill="#2f9a35" />
      <path d="M24 16L28.500 32H19.500Z" fill="#2f9a35" />
      <rect x="6" y="59.500" width="35" height="35" fill="none" stroke="#a5a5a5" strokeWidth="1.500" />
      <ellipse cx="24" cy="77" rx="4.500" ry="4.500" fill="#1040e8" />
      <path d="M22 77H27M24 74V80" stroke="#061a80" />
      <rect x="42" y="74.500" width="28" height="5" fill="#d93030" />
      <path d="M85 77L69 81.500V72.500Z" fill="#e83a3a" />
      <text x="94" y="81" fill="#c33a3a" fontSize="11" fontFamily="Liberation Sans Narrow, Liberation Sans, sans-serif" textAnchor="middle">X</text>
    </svg>
  );
}

const categories: [Branch, string][] = [
  ["first", "所有命令"],
  ["plus", "所有选项卡"],
  ["plus", "所有边框条/QAT"],
  ["plus", "所有组"],
  ["plus", "所有库"],
  ["plus", "所有下拉菜单"],
  ["plus", "菜单"],
  ["leaf", "新建项"],
  ["minus", "我的项"],
];

function CustomizeDialog() {
  return (
    <div
      role="dialog"
      aria-label="定制"
      className="absolute top-[66px] right-[39px] w-[504px] border border-t-0 border-[#1c1c1c] bg-[#464646] pb-[14px] text-[16px] leading-5 text-white"
    >
      <div className="-mx-px flex h-7 items-center bg-[#3195b8] pr-[7px] pl-[9px]">
        <h2 className="flex-1 pt-1">定制</h2>
        <button type="button" aria-label="帮助" className="mr-[13px] font-['Open_Sans',sans-serif] text-[17px] font-extrabold">?</button>
        <button type="button" aria-label="关闭窗口">
          <Svg s={12}><path d="M1 1L11 11M11 1L1 11" strokeWidth={2.200} /></Svg>
        </button>
      </div>
      <div className="px-[9px] pt-1">
        <div role="tablist" className="flex h-[34px] items-end">
          <button type="button" role="tab" aria-selected="true" className="relative z-10 -mb-px h-[35px] border border-b-0 border-[#1c1c1c] bg-[#464646] px-[17px] text-[#3fa7cb]">
            命令
          </button>
          {["选项卡/条", "快捷方式", "图标/工具提示"].map((t) => (
            <button key={t} type="button" role="tab" aria-selected="false" className="h-8 border border-b-0 border-[#1c1c1c] bg-[#323232] px-[7px] pt-[2px]">
              {t}
            </button>
          ))}
        </div>
        <div className="border border-[#1c1c1c] px-2 pb-2">
          <p className="-ml-px pt-[15px] pb-3 leading-[21px]">
            要向功能区选项卡、边框条或 QAT 添加命令，选择一个类别并将命令从“命令”列表拖至所需的位置。
          </p>
          <div className="flex h-[270px] gap-[11px]">
            <section className="flex flex-1 flex-col rounded-xs border border-[#1c1c1c] px-2 pt-[6px] pb-2">
              <h3 className="mb-[9px] text-[#3fa7cb]">类别</h3>
              <div className="flex min-h-0 flex-1 overflow-hidden border-2 border-[#181818]">
                <ul role="tree" className="flex-1">
                  {categories.map(([k, t], i) => (
                    <li key={t} role="treeitem" className={i % 2 ? "flex h-6 items-stretch border-b border-[#262626] bg-[#373737]" : "flex h-6 items-stretch border-b border-[#262626] bg-[#323232]"}>
                      <Gutter kind={k} />
                      <span className={i === 0 ? "flex-1 bg-[#00557f] pt-[2px] pl-[3px]" : "flex-1 pt-[2px] pl-[3px]"}>{t}</span>
                    </li>
                  ))}
                  <li role="treeitem" className="flex h-6 bg-[#373737] pt-[2px] pl-[45px]">我的菜单</li>
                </ul>
                <div className="w-[17px] bg-[#f0f0f0]">
                  <div className="mt-[17px] ml-2 h-[121px] w-[2px] bg-[#858585]" />
                </div>
              </div>
            </section>
            <div className="flex w-[218px] flex-col gap-[2px]">
              <section className="rounded-xs border border-[#1c1c1c] px-2 pt-[6px] pb-2">
                <label htmlFor="cmd-search" className="mb-[9px] block text-[#3fa7cb]">搜索</label>
                <div className="flex h-[30px] items-stretch gap-[2px]">
                  <span className="relative flex flex-1">
                    <input
                      id="cmd-search"
                      defaultValue="曲线上"
                      className="w-full border border-[#cfcfcf] bg-transparent pl-[5px] outline-none"
                    />
                    <span aria-hidden="true" className="pointer-events-none absolute top-[4px] left-[5px] h-[22px] border-l border-[#ff8a20] bg-[#0078d7] leading-[22px]">
                      曲线上
                    </span>
                  </span>
                  <button type="button" aria-label="清除" className="w-6 border border-[#cfcfcf]">X</button>
                </div>
              </section>
              <section className="flex flex-1 flex-col rounded-xs border border-[#1c1c1c] px-2 pt-1 pb-2">
                <h3 className="mb-[10px] whitespace-nowrap text-[#3fa7cb]">有 1 条与结果“曲线上”匹配</h3>
                <ul className="flex-1 border border-[#1c1c1c] bg-[#323232] pt-[5px]">
                  <li className="flex items-center gap-[6px] pl-[30px] text-[15px]">
                    <BrushCurve />
                    曲线上的点
                  </li>
                </ul>
              </section>
            </div>
          </div>
        </div>
        <div className="flex justify-end gap-[2px] pt-[2px] pr-[3px]">
          <button type="button" className="h-[33px] w-[78px] border border-[#cfcfcf]">键盘...</button>
          <button type="button" className="h-[33px] w-[78px] border border-[#cfcfcf]">关闭</button>
        </div>
      </div>
    </div>
  );
}

function Graphics() {
  return (
    <main className="flex min-w-0 flex-1 flex-col border-l border-[#1c1c1c]">
      <div className="flex h-[31px] shrink-0 border-b-2 border-[#3195b8]">
        <div className="flex items-center bg-[#3195b8] pr-[6px] pl-[5px] text-[16px] leading-6 text-white">
          <Svg w={17} h={17}>
            <path d="M2.500 2V14H8M0.500 9Q5 1 15 1.500" stroke={C} strokeWidth={1.300} />
            <circle cx="8" cy="7.500" r="4" stroke={C} />
            <path d="M6 16L7 12.500L13 6L15.500 8L9.500 14.500Z" fill="#f0c84a" stroke="#222" strokeWidth={0.700} />
            <path d="M6 16L7 12.500L9.500 14.500Z" fill="#fff" stroke="#222" strokeWidth={0.700} />
          </Svg>
          <span className="ml-[3px]">_model43.prt</span>
          <span className="ml-[7px]">
            <Svg w={10} h={11}><path d="M1 1H6L8.500 3.500V6M8.500 8V10H1V1M5 7L9 5L7 9" strokeWidth={1.500} /></Svg>
          </span>
          <button type="button" aria-label="关闭部件" className="ml-[6px]">
            <Svg s={9}><path d="M1 1L8 8M8 1L1 8" stroke="#8c7b78" strokeWidth={2} /></Svg>
          </button>
        </div>
      </div>
      <div className="relative min-h-0 flex-1 overflow-hidden bg-[#242529]">
        <div className="absolute top-[317px] right-0 left-px border-t border-dashed border-[#f58a8a]" />
        <div className="absolute top-0 bottom-0 left-[655px] border-l border-dashed border-[#8fae7c]" />
        <svg width="14" height="14" className="absolute top-[310px] left-[648px]" aria-hidden="true">
          <path d="M0 7H14M7 0V14" stroke="#0000ff" strokeWidth="2" />
        </svg>
        <div className="absolute top-[36px] left-[849px] h-px w-[342px] bg-[#9a5a08]" />
        <ConstraintBar />
        <Triad />
        <CustomizeDialog />
        <p className="absolute right-1 bottom-[2px] font-['Liberation_Serif','Noto_Sans_CJK_SC',serif] text-[16px] leading-5 whitespace-nowrap text-[#d8d8d8]">
          UG爱好者论坛@whinnyjia
        </p>
      </div>
    </main>
  );
}

export default function App() {
  return (
    <div className="flex h-screen flex-col overflow-hidden bg-[#323232] font-['Noto_Sans','Noto_Sans_CJK_SC',sans-serif]">
      <Shades />
      <TitleBar />
      <Ribbon />
      <SelectionBar />
      <div className="flex min-h-0 flex-1">
        <ResourceBar />
        <PartNavigator />
        <div className="w-[81px] shrink-0" />
        <Graphics />
      </div>
    </div>
  );
}
